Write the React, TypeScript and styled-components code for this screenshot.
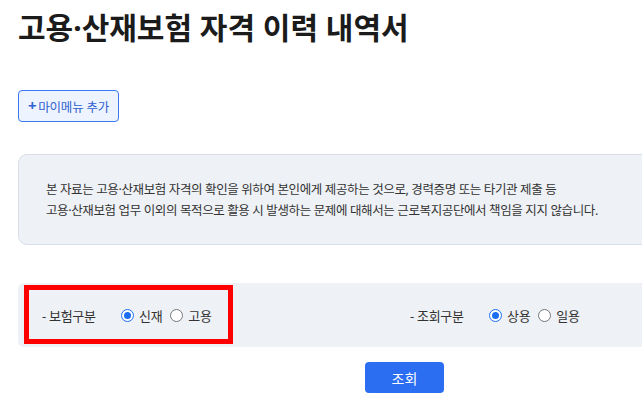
import React from "react";
import styled, { createGlobalStyle } from "styled-components";

const Global = createGlobalStyle`
  html, body {
    margin: 0;
    padding: 0;
    background: #ffffff;
    overflow: hidden;
  }
  body {
    font-family: "Noto Sans", "Noto Sans CJK KR", sans-serif;
    color: #222;
  }
`;

const Page = styled.div`
  width: 773px;
  padding: 8px 0 0 18px;
  display: flex;
  flex-direction: column;
`;

const Title = styled.h1`
  margin: 0;
  font-size: 30px;
  line-height: 40px;
  font-weight: 700;
  letter-spacing: 0;
  color: #1b1b1b;
`;

const MenuButton = styled.button`
  margin-top: 42px;
  align-self: flex-start;
  width: 101px;
  height: 32px;
  display: flex;
  align-items: center;
  justify-content: center;
  gap: 2px;
  border: 1px solid #3a78ef;
  border-radius: 4px;
  background: #eef4ff;
  color: #2f62cf;
  font-family: inherit;
  font-size: 12.5px;
  letter-spacing: -0.2px;
  padding: 0;
  cursor: pointer;
`;

const Plus = styled.span`
  font-size: 15px;
  font-weight: 700;
  line-height: 1;
  margin-top: -1px;
`;

const Notice = styled.div`
  margin-top: 32px;
  height: 91px;
  box-sizing: border-box;
  padding: 24px 27px;
  border: 1px solid #d9dfe9;
  border-radius: 9px;
  background: #eef1f6;
  font-size: 12.5px;
  line-height: 21px;
  letter-spacing: -0.38px;
  color: #333;
`;

const Filters = styled.div`
  position: relative;
  margin-top: 38px;
  height: 64px;
  display: flex;
  align-items: center;
  padding-left: 24px;
  border-radius: 6px 0 0 6px;
  background: #eef1f6;
`;

const Field = styled.div<{ $width: number }>`
  width: ${(p) => p.$width}px;
  display: flex;
  align-items: center;
`;

const FieldLabel = styled.span`
  width: 79px;
  font-size: 13px;
  letter-spacing: -0.3px;
  color: #333;
`;

const Option = styled.label`
  display: flex;
  align-items: center;
  margin-right: 8px;
  font-size: 13px;
  letter-spacing: -0.3px;
  color: #333;
`;

const Radio = styled.span<{ $on: boolean }>`
  width: 13px;
  height: 13px;
  box-sizing: border-box;
  border-radius: 50%;
  margin-right: 5px;
  border: ${(p) => (p.$on ? "1.5px solid #1b6ef3" : "1px solid #767676")};
  background: #fff;
  display: flex;
  align-items: center;
  justify-content: center;
  &::after {
    content: "";
    width: 7px;
    height: 7px;
    border-radius: 50%;
    background: ${(p) => (p.$on ? "#1b6ef3" : "transparent")};
  }
`;

const Highlight = styled.div`
  position: absolute;
  left: 6px;
  top: 2px;
  width: 209px;
  height: 59px;
  box-sizing: border-box;
  border: 5px solid #ff0000;
  pointer-events: none;
`;

const Actions = styled.div`
  margin-top: 15px;
  display: flex;
  justify-content: center;
`;

const SearchButton = styled.button`
  width: 79px;
  height: 31px;
  border: none;
  border-radius: 4px;
  background: #2b6ef2;
  color: #fff;
  font-family: inherit;
  font-size: 14px;
  padding: 0;
  cursor: pointer;
`;

type Opt = { label: string; on: boolean };

const Group = ({ label, options, width }: { label: string; options: Opt[]; width: number }) => (
  <Field $width={width}>
    <FieldLabel>- {label}</FieldLabel>
    {options.map((o) => (
      <Option key={o.label}>
        <Radio $on={o.on} />
        {o.label}
      </Option>
    ))}
  </Field>
);

export default function App() {
  return (
    <>
      <Global />
      <Page>
        <Title>고용·산재보험 자격 이력 내역서</Title>
        <MenuButton>
          <Plus>+</Plus>마이메뉴 추가
        </MenuButton>
        <Notice>
          본 자료는 고용·산재보험 자격의 확인을 위하여 본인에게 제공하는 것으로, 경력증명 또는 타기관 제출 등
          <br />
          고용·산재보험 업무 이외의 목적으로 활용 시 발생하는 문제에 대해서는 근로복지공단에서 책임을 지지 않습니다.
        </Notice>
        <Filters>
          <Group
            label="보험구분"
            width={368}
            options={[
              { label: "신재", on: true },
              { label: "고용", on: false },
            ]}
          />
          <Group
            label="조회구분"
            width={300}
            options={[
              { label: "상용", on: true },
              { label: "일용", on: false },
            ]}
          />
          <Highlight />
        </Filters>
        <Actions>
          <SearchButton>조회</SearchButton>
        </Actions>
      </Page>
    </>
  );
}
